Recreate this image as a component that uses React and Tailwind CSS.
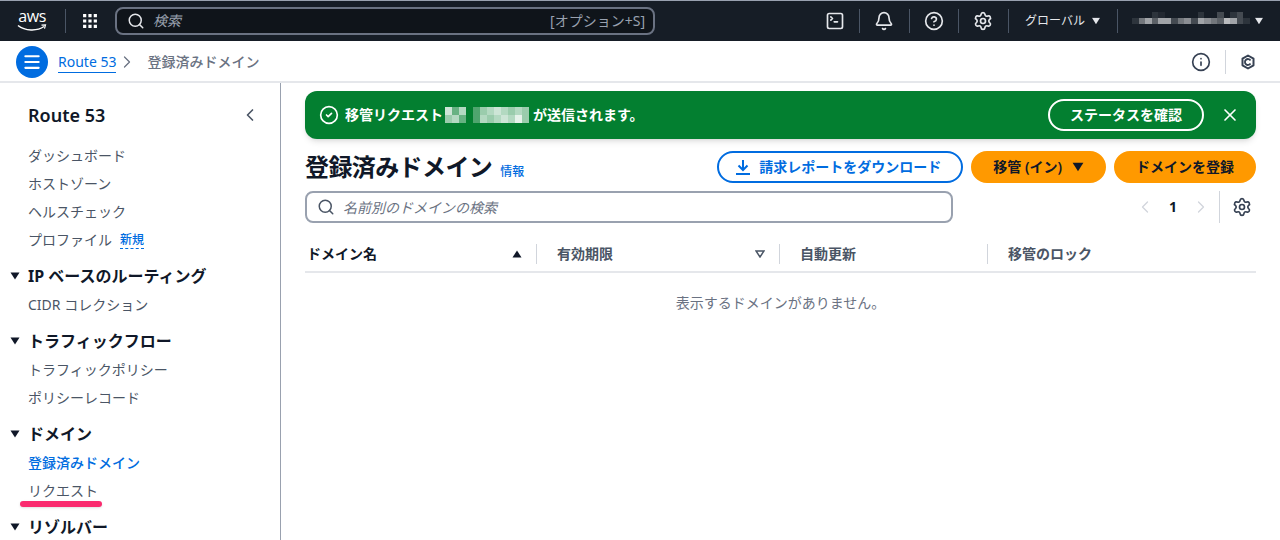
import { Bell, ChevronLeft, ChevronRight, CircleCheck, CircleHelp, Info, Menu, Search, Settings, SquareTerminal, X } from 'lucide-react';

const navGroups = [
  { items: ['ダッシュボード', 'ホストゾーン', 'ヘルスチェック'] },
  { title: 'IP ベースのルーティング', items: ['CIDR コレクション'] },
  { title: 'トラフィックフロー', items: ['トラフィックポリシー', 'ポリシーレコード'] },
  { title: 'ドメイン', items: ['登録済みドメイン', 'リクエスト'] },
  { title: 'リゾルバー', items: [] },
];

// redacted account name in the top bar
const accountCells = [
  'bg-transparent', 'bg-transparent', 'bg-transparent', 'bg-white/10', 'bg-white/5', 'bg-transparent', 'bg-transparent', 'bg-transparent', 'bg-transparent', 'bg-transparent', 'bg-white/10', 'bg-transparent', 'bg-transparent', 'bg-white/20', 'bg-transparent', 'bg-white/10', 'bg-white/20', 'bg-transparent',
  'bg-white/10', 'bg-white/40', 'bg-white/60', 'bg-white/30', 'bg-white/60', 'bg-white/60', 'bg-white/20', 'bg-white/40', 'bg-white/50', 'bg-white/20', 'bg-white/60', 'bg-white/50', 'bg-white/40', 'bg-white/30', 'bg-white/70', 'bg-white/60', 'bg-white/20', 'bg-white/10',
];

// redacted domain name in the banner
const domainCells = [
  'bg-white/80', 'bg-white/40', 'bg-white/70', 'bg-transparent', 'bg-white/30', 'bg-white/60', 'bg-white/70', 'bg-white/80', 'bg-white/70', 'bg-white/60', 'bg-white/70', 'bg-white/60',
  'bg-white/60', 'bg-white/70', 'bg-white/40', 'bg-transparent', 'bg-white/30', 'bg-white/70', 'bg-white/60', 'bg-white/70', 'bg-white/80', 'bg-white/70', 'bg-white/90', 'bg-white/60',
];

function Caret({ className = 'w-2.5 h-2' }) {
  return (
    <svg viewBox="0 0 10 8" className={`fill-current shrink-0 ${className}`}>
      <path d="M0.5 0.5h9L5 7.5z" />
    </svg>
  );
}

function AwsLogo() {
  return (
    <div className="flex flex-col items-center w-8 text-white">
      <span className="font-['Open_Sans',sans-serif] text-base leading-3 tracking-tight">aws</span>
      <svg viewBox="0 0 30 8" className="w-8 h-2 mt-0.5">
        <path d="M1 1.5C8 7 20 7.5 27 2.5" fill="none" stroke="currentColor" strokeWidth="1.5" />
        <path d="M24.5 1.2L28.5 1l-1 3.6" fill="none" stroke="currentColor" strokeWidth="1.2" />
      </svg>
    </div>
  );
}

function GridIcon() {
  return (
    <svg viewBox="0 0 15 15" className="w-4 h-4 fill-white">
      <path d="M1 1h3v3H1zM6 1h3v3H6zM11 1h3v3h-3zM1 6h3v3H1zM6 6h3v3H6zM11 6h3v3h-3zM1 11h3v3H1zM6 11h3v3H6zM11 11h3v3h-3z" />
    </svg>
  );
}

function FeedbackIcon() {
  return (
    <svg viewBox="0 0 16 16" className="w-4 h-4 fill-none stroke-gray-700" strokeWidth="2">
      <path d="M8 1.5l5.5 3.2v6.6L8 14.5l-5.5-3.2V4.7z" strokeLinejoin="round" />
      <path d="M10.5 6.4A3 3 0 1 0 10.5 9.6" strokeWidth="1.8" />
    </svg>
  );
}

function DownloadIcon() {
  return (
    <svg viewBox="0 0 16 16" className="w-4 h-4 fill-none stroke-current" strokeWidth="2">
      <path d="M8 1v9.5M3.5 6.5L8 11l4.5-4.5M1 15h14" />
    </svg>
  );
}

function TopBar() {
  return (
    <header className="h-10 shrink-0 box-content border-t border-gray-400 bg-[#161d26] flex items-center text-white">
      <div className="w-[66px] pl-4 flex justify-start border-r border-gray-600 h-6 items-center">
        <AwsLogo />
      </div>
      <div className="px-4"><GridIcon /></div>
      <div className="w-[540px] h-7 ml-px flex items-center gap-2 pl-2.5 pr-2 rounded-lg border-2 border-gray-500 bg-[#0f141a] text-sm text-gray-400">
        <Search className="w-4.5 h-4.5 text-gray-200" strokeWidth={2} />
        <span className="italic flex-1">検索</span>
        <span>[オプション+S]</span>
      </div>
      <div className="ml-auto flex items-center text-gray-200">
        <div className="w-12 flex justify-center"><SquareTerminal className="w-5 h-5" strokeWidth={2} /></div>
        <div className="w-px h-6 bg-gray-600" />
        <div className="w-12 mr-px flex justify-center"><Bell className="w-5 h-5" strokeWidth={2} /></div>
        <div className="w-px h-6 bg-gray-600" />
        <div className="w-12 flex justify-center"><CircleHelp className="w-5 h-5" strokeWidth={2} /></div>
        <div className="w-px h-6 bg-gray-600" />
        <div className="w-12 mr-px flex justify-center"><Settings className="w-5 h-5" strokeWidth={2} /></div>
        <div className="w-px h-6 bg-gray-600" />
        <div className="flex items-center gap-1.5 px-4 text-xs">
          <span>グローバル</span>
          <Caret className="w-2.5 h-2 scale-90" />
        </div>
        <div className="w-px h-6 bg-gray-600" />
        <div className="flex items-center gap-1 pl-3.5 pr-4">
          <div className="w-[118px] mb-1.5 grid grid-cols-[repeat(18,1fr)]">
            {accountCells.map((c, i) => <div key={i} className={`h-1.5 ${c}`} />)}
          </div>
          <Caret className="w-2.5 h-2 scale-90" />
        </div>
      </div>
    </header>
  );
}

function Breadcrumbs() {
  return (
    <div className="h-[42px] shrink-0 border-b-2 border-gray-200 flex items-center pt-0.5 pl-4 pr-6 bg-white">
      <div className="w-8 h-8 rounded-full bg-[#006ce0] flex items-center justify-center text-white">
        <Menu className="w-5 h-5" strokeWidth={2.5} />
      </div>
      <a className="ml-2.5 text-sm text-[#006ce0] border-b border-[#006ce0] leading-5">Route 53</a>
      <ChevronRight className="w-5 h-5 ml-px mr-2.5 text-gray-500" strokeWidth={1.5} />
      <span className="text-sm font-medium text-gray-500">登録済みドメイン</span>
      <div className="ml-auto flex items-center gap-3.5 text-gray-700">
        <Info className="w-5 h-5" strokeWidth={2} />
        <div className="w-px h-6 bg-gray-300" />
        <FeedbackIcon />
      </div>
    </div>
  );
}

function Sidebar() {
  return (
    <aside className="w-[281px] shrink-0 border-r border-gray-400 pl-7 pr-5 pt-5 relative overflow-hidden">
      <div className="flex items-center justify-between h-6">
        <h2 className="text-lg font-semibold text-gray-900">Route 53</h2>
        <ChevronLeft className="w-5 h-5 text-gray-600" strokeWidth={2} />
      </div>
      <nav className="mt-4 pt-px flex flex-col">
        {navGroups.map((group, idx) => (
          <div key={idx} className="flex flex-col gap-1 mb-3">
            {group.title && (
              <div className="relative flex items-center h-6 mb-px text-base font-bold text-gray-900">
                <Caret className="absolute -left-4.5 w-2.5 h-2 text-gray-900" />
                <span>{group.title}</span>
              </div>
            )}
            {group.items.map((item) => (
              <a
                key={item}
                className={`h-6 flex items-center text-sm ${item === '登録済みドメイン' ? 'text-[#006ce0] font-medium' : 'text-gray-600'}`}
              >
                {item}
              </a>
            ))}
            {idx === 0 && (
              <div className="h-6 flex items-center gap-2 text-sm text-gray-600">
                <span>プロファイル</span>
                <span className="text-xs font-medium text-[#006ce0] border-b border-dashed border-[#006ce0]">新規</span>
              </div>
            )}
          </div>
        ))}
      </nav>
      <div className="absolute left-5 top-[418px] w-[82px] h-1.5 rounded-full bg-[#fa2a6e] shadow-sm" />
    </aside>
  );
}

function Banner() {
  return (
    <div className="h-12 rounded-xl bg-[#037f30] shadow-md flex items-center pl-3.5 pr-4 text-white">
      <CircleCheck className="w-5 h-5" strokeWidth={2} />
      <span className="ml-1.5 text-sm font-bold">移管リクエスト</span>
      <div className="w-[84px] ml-0.5 grid grid-cols-12">
        {domainCells.map((c, i) => <div key={i} className={`h-2 ${c}`} />)}
      </div>
      <span className="ml-1 text-sm font-bold">が送信されます。</span>
      <button className="ml-auto h-8 px-5 rounded-full border-2 border-white text-sm font-semibold">ステータスを確認</button>
      <X className="w-5 h-5 ml-4" strokeWidth={2} />
    </div>
  );
}

function Toolbar() {
  return (
    <div className="flex items-center justify-between mt-3">
      <div className="flex items-baseline gap-2">
        <h1 className="text-2xl font-bold tracking-tight text-gray-900">登録済みドメイン</h1>
        <a className="text-xs font-medium text-[#006ce0]">情報</a>
      </div>
      <div className="flex items-center gap-2">
        <button className="h-8 pl-4 pr-5 flex items-center gap-2 rounded-full border-2 border-[#006ce0] text-sm font-semibold text-[#006ce0]">
          <DownloadIcon />
          請求レポートをダウンロード
        </button>
        <button className="h-8 px-5 flex items-center gap-2.5 rounded-full border-2 border-[#ff9900] bg-[#ff9900] text-sm font-semibold text-gray-900">
          移管 (イン)
          <Caret className="w-3 h-2.5" />
        </button>
        <button className="h-8 px-5 rounded-full border-2 border-[#ff9900] bg-[#ff9900] text-sm font-semibold text-gray-900">ドメインを登録</button>
      </div>
    </div>
  );
}

function Filter() {
  return (
    <div className="flex items-center justify-between mt-2">
      <div className="w-[648px] h-8 flex items-center gap-2 pl-2.5 pr-2 rounded-lg border-2 border-gray-400 text-sm text-gray-500">
        <Search className="w-4.5 h-4.5 text-gray-600" strokeWidth={2} />
        <span className="italic pt-0.5">名前別のドメインの検索</span>
      </div>
      <div className="flex items-center pr-1">
        <ChevronLeft className="w-5 h-5 text-gray-300" strokeWidth={1.5} />
        <span className="w-9 text-center text-sm font-bold text-gray-900">1</span>
        <ChevronRight className="w-5 h-5 text-gray-300" strokeWidth={1.5} />
        <div className="w-px h-8 bg-gray-300 ml-2 mr-3" />
        <Settings className="w-5 h-5 text-gray-700" strokeWidth={2} />
      </div>
    </div>
  );
}

function Table() {
  return (
    <div className="mt-3.5">
      <div className="grid grid-cols-[232px_243px_208px_1fr] h-9 items-center border-b-2 border-gray-200 text-sm font-semibold text-gray-600">
        <div className="flex items-center h-5 pl-0.5 pr-3.5 border-r border-gray-300 text-gray-900">
          <span className="flex-1">ドメイン名</span>
          <Caret className="w-2.5 h-2 rotate-180" />
        </div>
        <div className="flex items-center h-5 pl-5 pr-3.5 border-r border-gray-300">
          <span className="flex-1">有効期限</span>
          <svg viewBox="0 0 10 8" className="w-2.5 h-2 fill-none stroke-gray-600" strokeWidth="1.5">
            <path d="M1 1h8L5 7z" />
          </svg>
        </div>
        <div className="h-5 pl-5 border-r border-gray-300">自動更新</div>
        <div className="h-5 pl-5">移管のロック</div>
      </div>
      <p className="mt-5 text-center text-sm text-gray-500">表示するドメインがありません。</p>
    </div>
  );
}

export default function App() {
  return (
    <div className="h-screen flex flex-col overflow-hidden bg-white font-['Noto_Sans','Noto_Sans_CJK_JP',sans-serif]">
      <TopBar />
      <Breadcrumbs />
      <div className="flex flex-1 min-h-0">
        <Sidebar />
        <main className="flex-1 pl-6 pr-6 pt-2">
          <Banner />
          <Toolbar />
          <Filter />
          <Table />
        </main>
      </div>
    </div>
  );
}
